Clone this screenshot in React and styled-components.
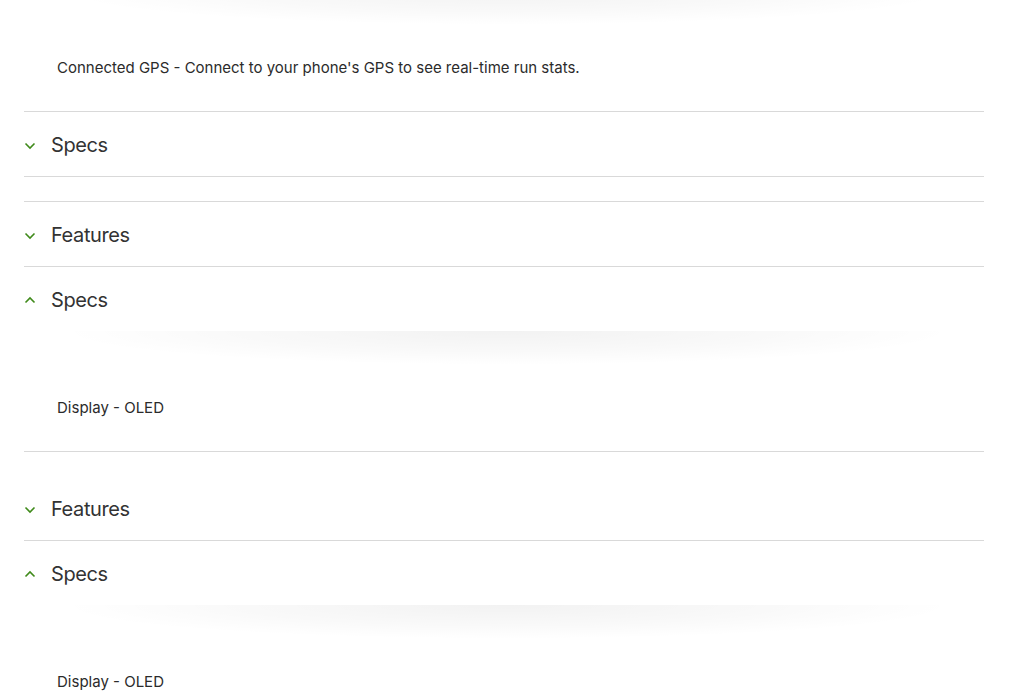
import React from 'react'
import styled, { createGlobalStyle } from 'styled-components'

const GlobalStyle = createGlobalStyle`
  html, body {
    margin: 0;
    padding: 0;
    background: #fff;
    font-family: Inter, "Liberation Sans", Arial, sans-serif;
    color: #333;
  }
`

// page is scrolled: the first accordion header sits just above the viewport
const Page = styled.div`
  margin: -73px 40px 0 24px;
  display: flex;
  flex-direction: column;
  gap: 24px;
`

const Group = styled.div`
  display: flex;
  flex-direction: column;
  border-top: ${({ topLine }) => (topLine ? '1px solid #d9d9d9' : 'none')};
`

const Header = styled.div`
  box-sizing: border-box;
  padding-top: 2px;
  display: flex;
  align-items: center;
  gap: 15px;
  cursor: pointer;
  border-bottom: ${({ open }) => (open ? 'none' : '1px solid #d9d9d9')};
  height: ${({ open }) => (open ? '64px' : '65px')};
`

const Title = styled.span`
  font-size: 20px;
  color: #333;
  line-height: 24px;
  letter-spacing: -0.4px;
`

const Chevron = styled.svg`
  width: 12px;
  height: 8px;
  margin-top: ${({ open }) => (open ? '0' : '2px')};
  flex-shrink: 0;
`

const Panel = styled.div`
  position: relative;
  height: 121px;
  box-sizing: border-box;
  padding: 68px 0 0 33px;
  border-bottom: 1px solid #d9d9d9;
  &::before {
    content: '';
    position: absolute;
    top: 0;
    left: 36px;
    right: 30px;
    height: 34px;
    background: radial-gradient(ellipse 50% 100% at 50% 0%, rgba(0, 0, 0, 0.05), rgba(0, 0, 0, 0.025) 60%, rgba(0, 0, 0, 0) 100%);
  }
`

const Text = styled.p`
  margin: 0;
  font-size: 15px;
  line-height: 18px;
  color: #2b2b2b;
`

const Arrow = ({ open }) => (
  <Chevron open={open} viewBox="0 0 12 8">
    <polyline
      points={open ? '1.5,6.5 6,2 10.5,6.5' : '1.5,1.5 6,6 10.5,1.5'}
      fill="none"
      stroke="#3f8a1a"
      strokeWidth="1.6"
    />
  </Chevron>
)

const Item = ({ title, open, children }) => (
  <>
    <Header open={open}>
      <Arrow open={open} />
      <Title>{title}</Title>
    </Header>
    {open && (
      <Panel>
        <Text>{children}</Text>
      </Panel>
    )}
  </>
)

export default function App() {
  return (
    <>
      <GlobalStyle />
      <Page>
        <Group>
          <Item title="Features" open>
            Connected GPS - Connect to your phone's GPS to see real-time run stats.
          </Item>
          <Item title="Specs" />
        </Group>
        <Group topLine>
          <Item title="Features" />
          <Item title="Specs" open>Display - OLED</Item>
        </Group>
        <Group>
          <Item title="Features" />
          <Item title="Specs" open>Display - OLED</Item>
        </Group>
      </Page>
    </>
  )
}
